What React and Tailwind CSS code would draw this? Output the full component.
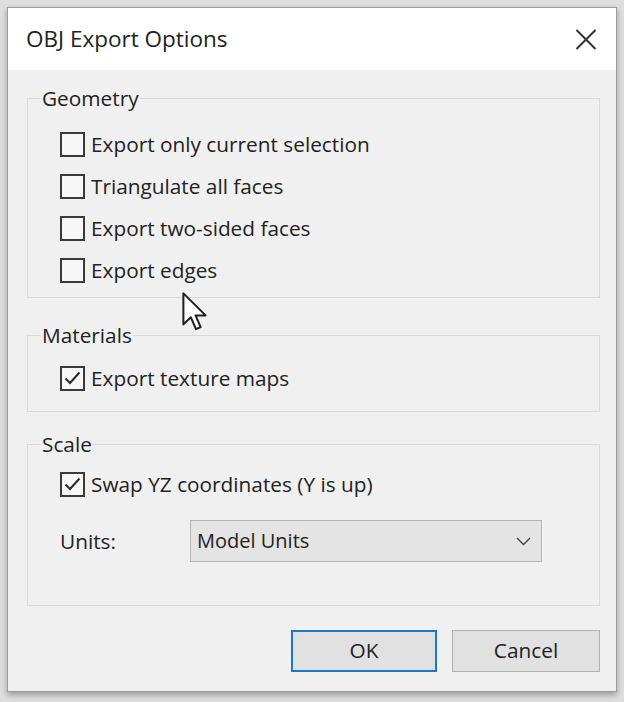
const font = { fontFamily: '"Open Sans", "Noto Sans", sans-serif' };

function CheckBox({ checked }) {
  return (
    <span className="flex h-[25px] w-[25px] shrink-0 items-center justify-center border-2 border-[#3a3a3a] bg-[#f7f7f7]">
      {checked && (
        <svg width="19" height="19" viewBox="0 0 19 19" fill="none">
          <path d="M2.5 9.5 L7 14 L16.5 3.5" stroke="#2a2a2a" strokeWidth="2" />
        </svg>
      )}
    </span>
  );
}

function Option({ label, checked }) {
  return (
    <div className="flex h-[42px] items-center gap-[6px]">
      <CheckBox checked={checked} />
      <span className="text-[20.8px] leading-[24px] text-[#222]">{label}</span>
    </div>
  );
}

function Group({ title, pt, pb, children }) {
  return (
    <fieldset className="border border-[#dadada] pl-[13px]" style={{ paddingTop: pt, paddingBottom: pb }}>
      <legend className="px-[1px] text-[20.8px] leading-[24px] text-[#222]">{title}</legend>
      <div className="pl-[19px]">{children}</div>
    </fieldset>
  );
}

function Cursor() {
  return (
    <svg
      className="absolute left-[182px] top-[292px]"
      width="26"
      height="40"
      viewBox="0 0 13 20"
      fill="none"
    >
      <path
        d="M0.7 0.7 L0.7 16.2 L4.4 12.6 L7 18.6 L9.3 17.6 L6.8 11.7 L11.8 11.7 Z"
        fill="#fff"
        stroke="#1e1e1e"
        strokeWidth="1"
        strokeLinejoin="round"
      />
    </svg>
  );
}

export default function App() {
  return (
    <div className="relative h-[702px] w-[624px] overflow-hidden bg-[#dedede] pl-[7px] pt-[7px]" style={font}>
      <div className="flex h-[685px] w-[610px] flex-col border border-[#9c9c9c] bg-[#f0f0f0] shadow-[0_3px_6px_rgba(0,0,0,0.3)]">
        <div className="flex h-[62px] items-center justify-between bg-white pl-[18px] pr-[19px]">
          <span className="text-[22.5px] leading-[28px] text-[#222]">OBJ Export Options</span>
          <svg width="22" height="21" viewBox="0 0 22 21" fill="none">
            <path d="M1.5 1 L20.5 20 M20.5 1 L1.5 20" stroke="#333" strokeWidth="2" />
          </svg>
        </div>

        <div className="flex flex-1 flex-col pl-[19px] pr-[16px] pt-[16px]">
          <Group title="Geometry" pt={13} pb={6}>
            <Option label="Export only current selection" />
            <Option label="Triangulate all faces" />
            <Option label="Export two-sided faces" />
            <Option label="Export edges" />
          </Group>

          <div className="mt-[25px]">
            <Group title="Materials" pt={10} pb={12}>
              <Option label="Export texture maps" checked />
            </Group>
          </div>

          <div className="mt-[20px]">
            <Group title="Scale" pt={7} pb={43}>
              <Option label="Swap YZ coordinates (Y is up)" checked />
              <div className="mt-[15px] flex items-center">
                <span className="w-[130px] text-[20.8px] leading-[24px] text-[#222]">Units:</span>
                <div className="flex h-[42px] w-[352px] items-center justify-between border border-[#b4b4b4] bg-[#e4e4e4] pl-[6px] pr-[10px]">
                  <span className="text-[20px] leading-[24px] text-[#222]">Model Units</span>
                  <svg width="15" height="9" viewBox="0 0 15 9" fill="none">
                    <path d="M1 1 L7.5 7.5 L14 1" stroke="#444" strokeWidth="1.4" />
                  </svg>
                </div>
              </div>
            </Group>
          </div>

          <div className="mt-[24px] flex justify-end gap-[15px]">
            <button className="flex h-[42px] w-[146px] items-center justify-center border-2 border-[#1a78d0] bg-[#e1e1e1] text-[20.8px] text-[#222]">
              OK
            </button>
            <button className="flex h-[42px] w-[148px] items-center justify-center border border-[#b0b0b0] bg-[#e1e1e1] text-[20.8px] text-[#222]">
              Cancel
            </button>
          </div>
        </div>
      </div>
      <Cursor />
    </div>
  );
}
